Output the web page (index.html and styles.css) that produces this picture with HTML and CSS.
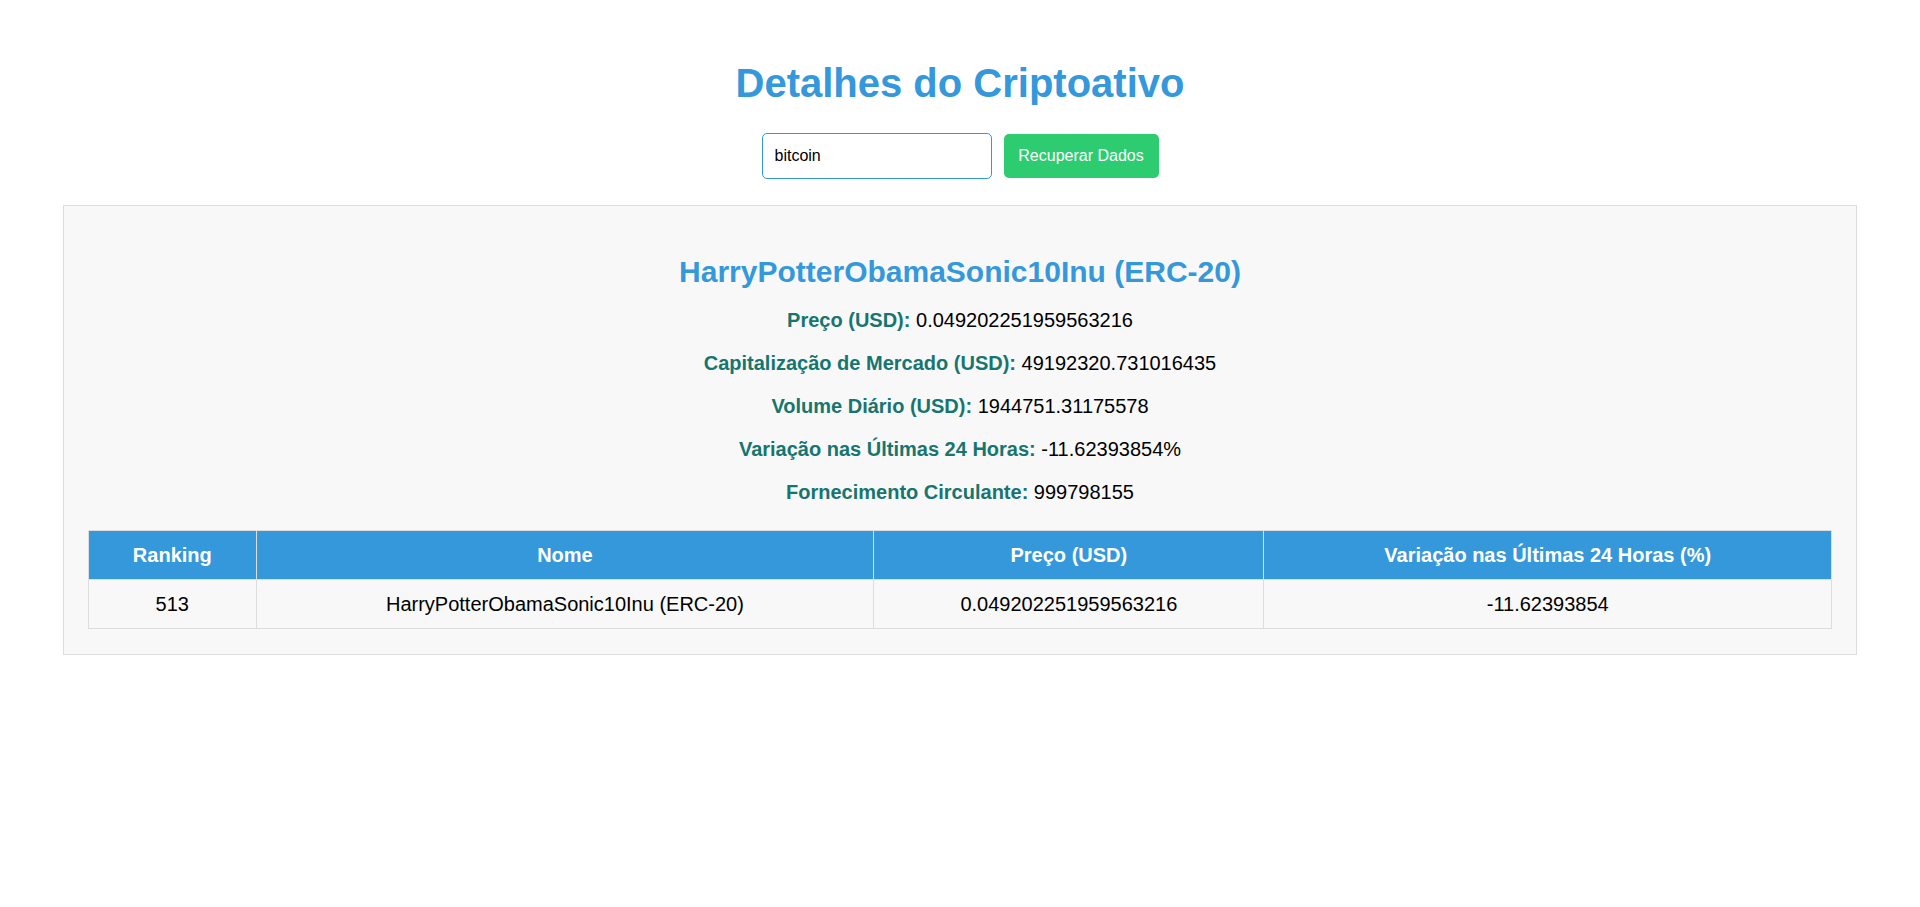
FILE: index.html
```html
<!DOCTYPE html>
<html lang="pt">
<head>
<meta charset="utf-8">
<title>Detalhes do Criptoativo</title>
<link rel="stylesheet" href="styles.css">
</head>
<body>
  <h1 class="page-title">Detalhes do Criptoativo</h1>
  <form class="search" onsubmit="return false">
    <input class="search-input" type="text" value="bitcoin">
    <button class="search-btn" type="submit">Recuperar Dados</button>
  </form>
  <div class="result">
    <h2 class="coin-name">HarryPotterObamaSonic10Inu (ERC-20)</h2>
    <p class="detail"><strong>Preço (USD):</strong> 0.049202251959563216</p>
    <p class="detail"><strong>Capitalização de Mercado (USD):</strong> 49192320.731016435</p>
    <p class="detail"><strong>Volume Diário (USD):</strong> 1944751.31175578</p>
    <p class="detail"><strong>Variação nas Últimas 24 Horas:</strong> -11.62393854%</p>
    <p class="detail"><strong>Fornecimento Circulante:</strong> 999798155</p>
    <table class="coin-table">
      <thead>
        <tr>
          <th>Ranking</th>
          <th>Nome</th>
          <th>Preço (USD)</th>
          <th>Variação nas Últimas 24 Horas (%)</th>
        </tr>
      </thead>
      <tbody>
        <tr>
          <td>513</td>
          <td>HarryPotterObamaSonic10Inu (ERC-20)</td>
          <td>0.049202251959563216</td>
          <td>-11.62393854</td>
        </tr>
      </tbody>
    </table>
  </div>
</body>
</html>
```
FILE: styles.css
```css
html, body {
  background: #ffffff;
}

body {
  margin: 0;
  padding: 34px 63px;
  font-family: "Liberation Sans", Arial, sans-serif;
  font-size: 20px;
  color: #000;
}

.page-title {
  font-size: 40px;
  font-weight: bold;
  color: #3498db;
  text-align: center;
  margin: 26.8px 0;
}

.search {
  display: flex;
  justify-content: center;
  align-items: center;
  gap: 12px;
  margin: 0 0 26px;
}

.search-input {
  box-sizing: border-box;
  width: 230px;
  height: 46px;
  padding: 0 12px;
  border: 1px solid #3498db;
  border-radius: 5px;
  font-family: "Liberation Sans", Arial, sans-serif;
  font-size: 16px;
  color: #000;
  background: #fff;
  outline: none;
}

.search-btn {
  box-sizing: border-box;
  width: 155px;
  height: 44px;
  padding: 0 12px;
  border: none;
  border-radius: 5px;
  background: #2ecc71;
  color: #fff;
  font-family: "Liberation Sans", Arial, sans-serif;
  font-size: 16px;
  cursor: pointer;
}

.result {
  border: 1px solid #dddddd;
  background: #f8f8f8;
  padding: 24px 24px 25px;
  text-align: center;
}

.coin-name {
  font-size: 30px;
  font-weight: bold;
  color: #3498db;
  margin: 25px 0 20px;
}

.detail {
  margin: 20px 0;
  line-height: 23px;
}

.detail strong {
  color: #17756f;
}

.coin-table {
  width: 100%;
  border-collapse: collapse;
  margin-top: 26px;
}

.coin-table th,
.coin-table td {
  border: 1px solid #dddddd;
  padding: 12px;
  text-align: center;
  line-height: 24px;
}

.coin-table th {
  background: #3498db;
  color: #fff;
  font-weight: bold;
}

.coin-table td {
  background: #f8f8f8;
}
```
